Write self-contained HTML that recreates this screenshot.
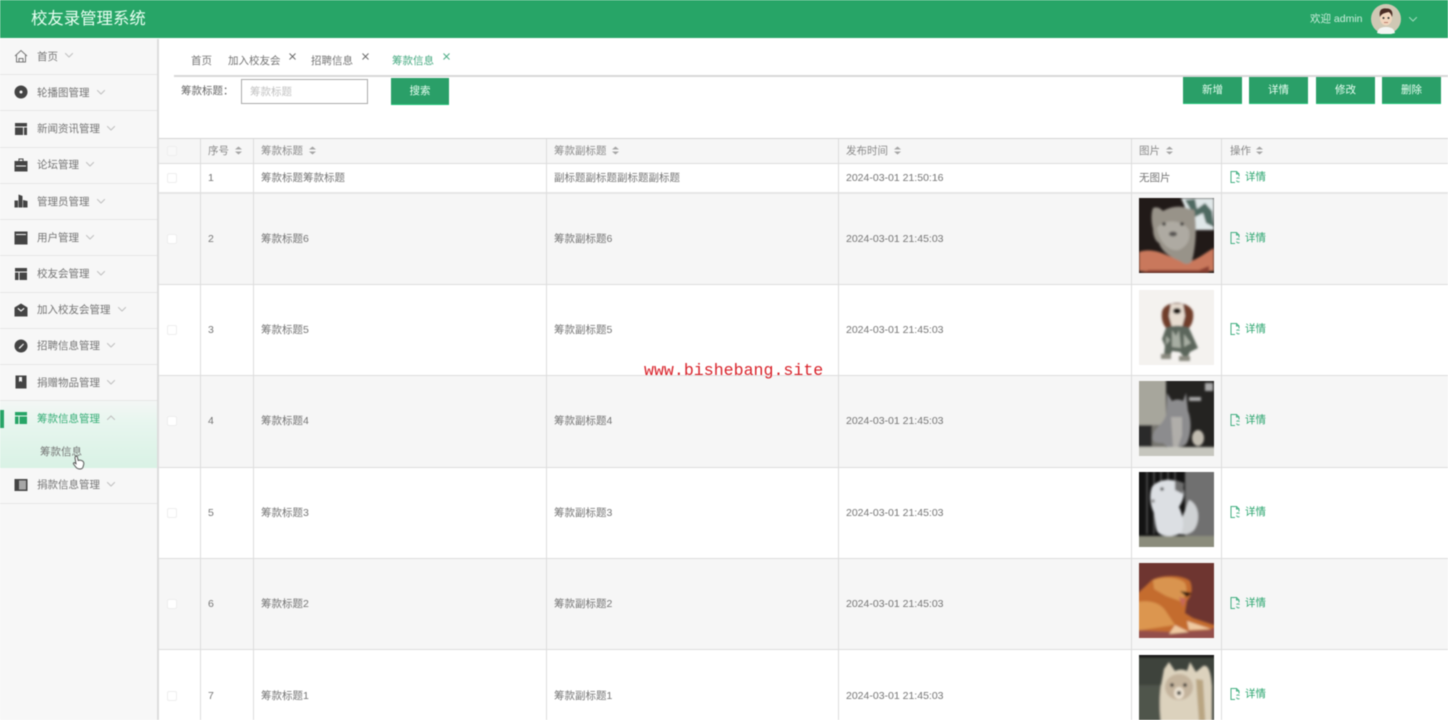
<!DOCTYPE html>
<html lang="zh"><head><meta charset="utf-8"><title>校友录管理系统</title>
<style>
*{box-sizing:border-box;margin:0;padding:0}
html,body{width:1448px;height:720px;overflow:hidden;background:#fff}
body{font-family:"Liberation Sans","Noto Sans CJK SC",sans-serif;font-size:10.5px;color:#757575;position:relative}
#wrap{position:absolute;left:0;top:0;width:1448px;height:720px;overflow:hidden;filter:blur(.45px)}
.a{position:absolute;white-space:nowrap;line-height:14px}
.top{position:absolute;left:0;top:0;width:1448px;height:38px;background:#27a567}
.side{position:absolute;left:0;top:39px;width:159px;height:681px;background:#f7f7f7;border-right:2px solid #dcdcdc}
.l{position:absolute;left:0;width:157px;height:1px;background:#e6e6e6}
.ic{position:absolute;left:14px;width:14px;height:14px;fill:#444}
.ch{position:absolute;width:8px;height:5px;fill:none;stroke:#c0c0c0;stroke-width:1}
.btn{position:absolute;background:#2a9f68;color:#e8fff2;text-align:center;border-bottom:1px solid #1fc477;height:27px;line-height:27px;width:59px;top:77px}
.hl{position:absolute;left:159px;width:1289px;height:1px;background:#ddd}
.vl{position:absolute;top:139px;width:1px;height:581px;background:#ddd}
.alt{position:absolute;left:159px;width:1289px;background:#f6f6f6;height:91px}
.cb{position:absolute;left:167px;width:10px;height:10px;border:1px solid #eee;border-radius:2px;background:#fff}
.img{position:absolute;left:1139px;width:75px;height:75px;overflow:hidden}
.img svg{display:block;width:75px;height:75px}
.det{position:absolute;left:1230px;color:#2ba56f;white-space:nowrap;line-height:14px;padding-left:15px}
.det svg{position:absolute;left:0;top:1px;width:11px;height:12px;fill:none;stroke:#45b083;stroke-width:1}
.sort{position:absolute;width:7px;height:9px;fill:#a5a5a5}
.x{position:absolute;width:7px;height:7px;fill:none;stroke:#666;stroke-width:.9}
</style></head><body><div id="wrap">

<div class="top"></div>
<div class="a" style="left:31px;top:9px;font-size:16.4px;line-height:20px;color:#e8fff2">校友录管理系统</div>
<div class="a" style="left:1310px;top:12px;color:#cdeedd;font-size:10.5px">欢迎 admin</div>
<svg style="position:absolute;left:1371px;top:4px;width:30px;height:30px" viewBox="0 0 30 30">
<circle cx="15" cy="15" r="15" fill="#cfc8b4"/><path d="M6 29c1-5 5-6 9-6s8 1 9 6l-4 1h-10z" fill="#f3f5f2"/><ellipse cx="15" cy="14" rx="6" ry="7.500" fill="#f1d5bd"/><path d="M9 13C7.500 6 11 4 15 4.500c5-.5 7.500 3 6 8.500-1-3-2-4.500-3.500-5-3 1-6.500 1-8.500 5z" fill="#4a2c25"/><circle cx="12.500" cy="14" r="1" fill="#333"/><circle cx="17.500" cy="14" r="1" fill="#333"/><path d="M13 18.500h4" stroke="#b06a5a" stroke-width=".8"/></svg>
<svg class="ch" style="left:1409px;top:17px;stroke:#9fdcbc" viewBox="0 0 8 5"><path d="M0 0l4 4 4-4"/></svg>

<div class="side"></div>
<div class="l" style="top:74px"></div><div class="l" style="top:110px"></div><div class="l" style="top:147px"></div><div class="l" style="top:183px"></div><div class="l" style="top:219px"></div><div class="l" style="top:255px"></div><div class="l" style="top:292px"></div><div class="l" style="top:328px"></div><div class="l" style="top:364px"></div><div class="l" style="top:400px"></div><div class="l" style="top:503px"></div>

<div style="position:absolute;left:0;top:401px;width:157px;height:67px;background:linear-gradient(#f4f6f5,#e8f6ef 30%,#d9f2e5)"></div>
<div style="position:absolute;left:0;top:410px;width:4px;height:18px;background:#27a567"></div>

<svg class="ic" style="top:49px;fill:none;stroke:#777;stroke-width:1" viewBox="0 0 14 14"><path d="M1 7l6-5.500L13 7M2.500 6v7h9V6M5 13V9.500h4V13"/></svg>
<div class="a" style="left:37px;top:50px">首页</div><svg class="ch" style="left:65px;top:53px" viewBox="0 0 8 5"><path d="M0 0l4 4 4-4"/></svg>

<svg class="ic" style="top:85px" viewBox="0 0 14 14"><path fill-rule="evenodd" d="M7 .5a6.500 6.500 0 1 0 0 13 6.500 6.500 0 0 0 0-13zM7 5.500a1.500 1.500 0 1 1 0 3 1.500 1.500 0 0 1 0-3z"/></svg>
<div class="a" style="left:37px;top:86px">轮播图管理</div><svg class="ch" style="left:97px;top:90px" viewBox="0 0 8 5"><path d="M0 0l4 4 4-4"/></svg>

<svg class="ic" style="top:122px" viewBox="0 0 14 14"><path d="M1 1h12v3.500H1zM1 5.500h8V13H1zM10 5.500h3V13h-3z"/></svg>
<div class="a" style="left:37px;top:122px">新闻资讯管理</div><svg class="ch" style="left:107px;top:126px" viewBox="0 0 8 5"><path d="M0 0l4 4 4-4"/></svg>

<svg class="ic" style="top:158px" viewBox="0 0 14 14"><path fill-rule="evenodd" d="M4.500 .5h5V3H13.500v10.500H.5V3h4zM5.500 1.500V3h3V1.500zM2 7.500v1h10v-1z"/></svg>
<div class="a" style="left:37px;top:158px">论坛管理</div><svg class="ch" style="left:86px;top:162px" viewBox="0 0 8 5"><path d="M0 0l4 4 4-4"/></svg>

<svg class="ic" style="top:194px" viewBox="0 0 14 14"><path d="M.5 13.500V6.500h3.500v7zM4.500 13.500V.5l4 1.500v11.500zM9 13.500V6l4.500 1v6.500z"/></svg>
<div class="a" style="left:37px;top:195px">管理员管理</div><svg class="ch" style="left:97px;top:199px" viewBox="0 0 8 5"><path d="M0 0l4 4 4-4"/></svg>

<svg class="ic" style="top:231px" viewBox="0 0 14 14"><path fill-rule="evenodd" d="M.5 .5h13v13H.5zM2 3v1h10V3z"/></svg>
<div class="a" style="left:37px;top:231px">用户管理</div><svg class="ch" style="left:86px;top:235px" viewBox="0 0 8 5"><path d="M0 0l4 4 4-4"/></svg>

<svg class="ic" style="top:267px" viewBox="0 0 14 14"><path d="M1 1h12v3.500H1zM1 5.500h3.500V13H1zM5.500 5.500H13V13H5.500z"/></svg>
<div class="a" style="left:37px;top:267px">校友会管理</div><svg class="ch" style="left:97px;top:271px" viewBox="0 0 8 5"><path d="M0 0l4 4 4-4"/></svg>

<svg class="ic" style="top:303px" viewBox="0 0 14 14"><path d="M7 .5l6.500 4V13.500H.5V4.500zM3.500 5.800L7 8.800l3.500-3-.8-.9L7 7.200 4.300 4.900z" fill-rule="evenodd"/></svg>
<div class="a" style="left:37px;top:303px">加入校友会管理</div><svg class="ch" style="left:118px;top:307px" viewBox="0 0 8 5"><path d="M0 0l4 4 4-4"/></svg>

<svg class="ic" style="top:339px" viewBox="0 0 14 14"><path fill-rule="evenodd" d="M7 .5a6.500 6.500 0 1 0 0 13 6.500 6.500 0 0 0 0-13zM9.300 4.500l.7.700L6 9.500l-1.200.2.200-1.200z"/></svg>
<div class="a" style="left:37px;top:339px">招聘信息管理</div><svg class="ch" style="left:107px;top:343px" viewBox="0 0 8 5"><path d="M0 0l4 4 4-4"/></svg>

<svg class="ic" style="top:375px" viewBox="0 0 14 14"><path fill-rule="evenodd" d="M1.500 .5h11v13h-11zM5 2v5l1.500-1L8 7V2z"/></svg>
<div class="a" style="left:37px;top:376px">捐赠物品管理</div><svg class="ch" style="left:107px;top:380px" viewBox="0 0 8 5"><path d="M0 0l4 4 4-4"/></svg>

<svg class="ic" style="top:411px;fill:#27a567" viewBox="0 0 14 14"><path d="M1 1h12v3.500H1zM1 5.500h3.500V13H1zM5.500 5.500H13V13H5.500z"/></svg>
<div class="a" style="left:37px;top:412px;color:#35ad76">筹款信息管理</div><svg class="ch" style="left:107px;top:415px" viewBox="0 0 8 5"><path d="M0 5l4-4 4 4"/></svg>

<div class="a" style="left:40px;top:445px">筹款信息</div>
<svg style="position:absolute;left:72px;top:455px;width:13px;height:15px" viewBox="0 0 13 15"><path d="M3.500 1.500c1-.7 1.800 0 2 1l.7 3 1.300-.4 1.500.2 1.700.8c1 .7 1.300 2 1 3.400l-.7 2.500c-.4 1.400-1.500 2-3 2-2 0-3.300-.7-4.200-2L1.500 9c-.5-.8.300-1.700 1.200-1.200L4 8.700 3 3c-.1-.6 0-1.100.5-1.500z" fill="#fff" stroke="#555" stroke-width="1"/></svg>

<svg class="ic" style="top:478px" viewBox="0 0 14 14"><path fill-rule="evenodd" d="M.5 1h13v12H.5zM5 2.500v9h7v-9z"/><path d="M5 2.500h7v9H5z" opacity=".45"/></svg>
<div class="a" style="left:37px;top:478px">捐款信息管理</div><svg class="ch" style="left:107px;top:482px" viewBox="0 0 8 5"><path d="M0 0l4 4 4-4"/></svg>

<div class="a" style="left:191px;top:54px">首页</div>
<div class="a" style="left:228px;top:54px">加入校友会</div>
<svg class="x" style="left:289px;top:53px" viewBox="0 0 7 7"><path d="M.5 .5l6 6M6.500 .5l-6 6"/></svg>
<div class="a" style="left:311px;top:54px">招聘信息</div>
<svg class="x" style="left:362px;top:53px" viewBox="0 0 7 7"><path d="M.5 .5l6 6M6.500 .5l-6 6"/></svg>
<div class="a" style="left:392px;top:54px;color:#45a980">筹款信息</div>
<svg class="x" style="left:443px;top:53px;stroke:#45a980" viewBox="0 0 7 7"><path d="M.5 .5l6 6M6.500 .5l-6 6"/></svg>
<div style="position:absolute;left:174px;top:75px;width:1274px;height:2px;background:#d8d8d8"></div>

<div class="a" style="left:181px;top:84px;color:#666">筹款标题：</div>
<div style="position:absolute;left:241px;top:79px;width:127px;height:25px;border:1px solid #aaa;background:#fff"></div>
<div class="a" style="left:250px;top:85px;color:#c2c2c2">筹款标题</div>
<div class="btn" style="left:391px;top:78px;width:58px;height:27px">搜索</div>
<div class="btn" style="left:1183px">新增</div>
<div class="btn" style="left:1249px">详情</div>
<div class="btn" style="left:1316px">修改</div>
<div class="btn" style="left:1382px">删除</div>

<div style="position:absolute;left:159px;top:139px;width:1289px;height:25px;background:#f6f6f6"></div>
<div class="alt" style="top:193px"></div>
<div class="alt" style="top:376px"></div>
<div class="alt" style="top:558px"></div>

<div class="hl" style="top:138px;background:#d4d4d4"></div><div class="hl" style="top:163px"></div><div class="hl" style="top:192px;height:2px;background:#e6e6e6"></div><div class="hl" style="top:284px"></div><div class="hl" style="top:375px"></div><div class="hl" style="top:467px"></div><div class="hl" style="top:558px"></div><div class="hl" style="top:649px"></div>
<div class="vl" style="left:200px"></div><div class="vl" style="left:253px"></div><div class="vl" style="left:546px"></div><div class="vl" style="left:838px"></div><div class="vl" style="left:1131px"></div><div class="vl" style="left:1221px"></div>

<div class="cb" style="top:146px;background:#f8f8f8"></div><div class="cb" style="top:173px"></div><div class="cb" style="top:234px"></div><div class="cb" style="top:325px"></div><div class="cb" style="top:416px"></div><div class="cb" style="top:508px"></div><div class="cb" style="top:599px"></div><div class="cb" style="top:691px"></div>

<div class="a" style="left:208px;top:144px;color:#8a8a8a">序号</div><svg class="sort" style="left:235px;top:146px" viewBox="0 0 7 9"><path d="M3.500 .5L7 3.500H0zM0 5.500h7L3.500 8.500z"/></svg>
<div class="a" style="left:261px;top:144px;color:#8a8a8a">筹款标题</div><svg class="sort" style="left:309px;top:146px" viewBox="0 0 7 9"><path d="M3.500 .5L7 3.500H0zM0 5.500h7L3.500 8.500z"/></svg>
<div class="a" style="left:554px;top:144px;color:#8a8a8a">筹款副标题</div><svg class="sort" style="left:612px;top:146px" viewBox="0 0 7 9"><path d="M3.500 .5L7 3.500H0zM0 5.500h7L3.500 8.500z"/></svg>
<div class="a" style="left:846px;top:144px;color:#8a8a8a">发布时间</div><svg class="sort" style="left:894px;top:146px" viewBox="0 0 7 9"><path d="M3.500 .5L7 3.500H0zM0 5.500h7L3.500 8.500z"/></svg>
<div class="a" style="left:1139px;top:144px;color:#8a8a8a">图片</div><svg class="sort" style="left:1166px;top:146px" viewBox="0 0 7 9"><path d="M3.500 .5L7 3.500H0zM0 5.500h7L3.500 8.500z"/></svg>
<div class="a" style="left:1230px;top:144px;color:#8a8a8a">操作</div><svg class="sort" style="left:1256px;top:146px" viewBox="0 0 7 9"><path d="M3.500 .5L7 3.500H0zM0 5.500h7L3.500 8.500z"/></svg>

<div class="a" style="left:208px;top:171px">1</div><div class="a" style="left:261px;top:171px">筹款标题筹款标题</div><div class="a" style="left:554px;top:171px">副标题副标题副标题副标题</div><div class="a" style="left:846px;top:171px">2024-03-01 21:50:16</div><div class="a" style="left:1139px;top:171px">无图片</div>
<div class="det" style="top:170px"><svg viewBox="0 0 11 12"><path d="M5 11.500H1V.5h5.500L9 3v2.500M6.500 .5V3H9M9.500 7.500a2 2 0 0 0-3 0M6.500 9.500a2 2 0 0 0 3 1"/></svg>详情</div>

<div class="a" style="left:208px;top:232px">2</div><div class="a" style="left:261px;top:232px">筹款标题6</div><div class="a" style="left:554px;top:232px">筹款副标题6</div><div class="a" style="left:846px;top:232px">2024-03-01 21:45:03</div>
<div class="det" style="top:231px"><svg viewBox="0 0 11 12"><path d="M5 11.500H1V.5h5.500L9 3v2.500M6.500 .5V3H9M9.500 7.500a2 2 0 0 0-3 0M6.500 9.500a2 2 0 0 0 3 1"/></svg>详情</div>
<div class="a" style="left:208px;top:323px">3</div><div class="a" style="left:261px;top:323px">筹款标题5</div><div class="a" style="left:554px;top:323px">筹款副标题5</div><div class="a" style="left:846px;top:323px">2024-03-01 21:45:03</div>
<div class="det" style="top:322px"><svg viewBox="0 0 11 12"><path d="M5 11.500H1V.5h5.500L9 3v2.500M6.500 .5V3H9M9.500 7.500a2 2 0 0 0-3 0M6.500 9.500a2 2 0 0 0 3 1"/></svg>详情</div>
<div class="a" style="left:208px;top:414px">4</div><div class="a" style="left:261px;top:414px">筹款标题4</div><div class="a" style="left:554px;top:414px">筹款副标题4</div><div class="a" style="left:846px;top:414px">2024-03-01 21:45:03</div>
<div class="det" style="top:413px"><svg viewBox="0 0 11 12"><path d="M5 11.500H1V.5h5.500L9 3v2.500M6.500 .5V3H9M9.500 7.500a2 2 0 0 0-3 0M6.500 9.500a2 2 0 0 0 3 1"/></svg>详情</div>
<div class="a" style="left:208px;top:506px">5</div><div class="a" style="left:261px;top:506px">筹款标题3</div><div class="a" style="left:554px;top:506px">筹款副标题3</div><div class="a" style="left:846px;top:506px">2024-03-01 21:45:03</div>
<div class="det" style="top:505px"><svg viewBox="0 0 11 12"><path d="M5 11.500H1V.5h5.500L9 3v2.500M6.500 .5V3H9M9.500 7.500a2 2 0 0 0-3 0M6.500 9.500a2 2 0 0 0 3 1"/></svg>详情</div>
<div class="a" style="left:208px;top:597px">6</div><div class="a" style="left:261px;top:597px">筹款标题2</div><div class="a" style="left:554px;top:597px">筹款副标题2</div><div class="a" style="left:846px;top:597px">2024-03-01 21:45:03</div>
<div class="det" style="top:596px"><svg viewBox="0 0 11 12"><path d="M5 11.500H1V.5h5.500L9 3v2.500M6.500 .5V3H9M9.500 7.500a2 2 0 0 0-3 0M6.500 9.500a2 2 0 0 0 3 1"/></svg>详情</div>
<div class="a" style="left:208px;top:689px">7</div><div class="a" style="left:261px;top:689px">筹款标题1</div><div class="a" style="left:554px;top:689px">筹款副标题1</div><div class="a" style="left:846px;top:689px">2024-03-01 21:45:03</div>
<div class="det" style="top:687px"><svg viewBox="0 0 11 12"><path d="M5 11.500H1V.5h5.500L9 3v2.500M6.500 .5V3H9M9.500 7.500a2 2 0 0 0-3 0M6.500 9.500a2 2 0 0 0 3 1"/></svg>详情</div>

<div class="img" style="top:198px"><svg viewBox="0 0 75 75"><defs><filter id="b" filterUnits="userSpaceOnUse" x="-10" y="-10" width="95" height="95"><feGaussianBlur stdDeviation="1"/></filter></defs><rect width="75" height="75" fill="#211a18"/><g filter="url(#b)"><path d="M42 0h33v32H56z" fill="#dfe7e8"/><path d="M46 2l10-1 2 10 8-6 7 8 2 16-8-4-3-10-8 4z" fill="#4f6a62"/><path d="M0 54C10 50 22 54 30 58l16 6c10 0 18-8 29-14v23H0z" fill="#c9785c"/><path d="M10 72h50l10-4v7H0z" fill="#8a3f33"/><path d="M14 10c5-2 8 1 10 3 10-6 22-5 28-1 3-2 4 1 4 6 2 16 0 34-3 45-4 5-8 3-12 0-10-4-18-9-21-18-4-2-6-8-6-14-2-8-2-16 0-21z" fill="#989389"/><path d="M18 30c8-10 26-8 32 2 2 10-2 16-10 20-10 2-20-8-22-22z" fill="#aeaaa2"/><circle cx="25" cy="26" r="1.800" fill="#3c3a38"/><circle cx="43" cy="26" r="1.800" fill="#3c3a38"/><ellipse cx="34" cy="36" rx="4" ry="2.500" fill="#595552"/></g></svg></div>

<div class="img" style="top:290px"><svg viewBox="0 0 75 75"><rect width="75" height="75" fill="#f4f2ef"/><g filter="url(#b)"><path d="M23 22c1-6 8-9 15-9s14 3 16 9c1 7-1 13-5 17H28c-4-4-6-10-5-17z" fill="#6f3d2c"/><path d="M32 14h12l2 12-3 11h-10l-3-11z" fill="#e8ddd0"/><ellipse cx="38" cy="21" rx="4" ry="3" fill="#1c1210"/><path d="M27 38c6-3 17-3 23 0l9 20-8 4-2 4H44l-3-4-8-1-2 5h-6l1-10-3-7z" fill="#5b665c"/><path d="M33 40l4 6 3-6 2 18-9-1zM45 44l7 9-7 4zM27 46l4 4-4 5z" fill="#a7aea3"/><rect x="22" y="64" width="10" height="5" fill="#8a8a80"/><rect x="40" y="66" width="11" height="5" fill="#8a8a80"/></g></svg></div>

<div class="img" style="top:381px"><svg viewBox="0 0 75 75"><rect width="75" height="75" fill="#242321"/><g filter="url(#b)"><rect x="-5" y="-5" width="32" height="50" fill="#a7a69c"/><rect x="-5" y="44" width="19" height="22" fill="#2c2b29"/><rect x="13" y="44" width="14" height="22" fill="#77766f"/><rect x="50" y="16" width="12" height="4" fill="#a8a8a8"/><rect x="66" y="2" width="8" height="8" fill="#aaa"/><rect x="-5" y="66" width="85" height="14" fill="#c6c6be"/><path d="M28 12l5 8c4-2 7-2 11 0l3-8 2 18c4 10 3 24-1 32-3 4-8 4-11 4H28l-4-4c-6 0-12 0-10-8 2-8 10-10 13-20z" fill="#8c8c8e"/><path d="M32 36h11v18l-4 12h-5z" fill="#b0aeaa"/><ellipse cx="59" cy="57" rx="6" ry="8" fill="#c1bcb0"/></g></svg></div>

<div class="img" style="top:472px"><svg viewBox="0 0 75 75"><rect width="75" height="75" fill="#131313"/><g filter="url(#b)"><rect x="46" y="-5" width="34" height="70" fill="#707070"/><rect x="-5" y="64" width="85" height="16" fill="#8b8c7c"/><path d="M8 -2v64M15 -2v64M22 -2v24M29 -2v14M36 -2v10" stroke="#8a8a8a" stroke-width=".8"/><path d="M50 28c10 4 12 20 5 30-6 6-14 5-18 3z" fill="#cfd2d4"/><path d="M13 15c6-8 22-10 30-2 4 8 1 16-3 22 4 8 6 20 2 26-6 4-20 5-24-2-2-6-2-12-3-18-4-8-5-18-2-26z" fill="#dcdfe3"/><path d="M36 8l9 3-1 11-8-4z" fill="#6e6e6e"/><circle cx="23" cy="17" r="1.800" fill="#555"/><circle cx="14" cy="29" r="1.800" fill="#888"/></g></svg></div>

<div class="img" style="top:563px"><svg viewBox="0 0 75 75"><rect width="75" height="75" fill="#6e3530"/><g filter="url(#b)"><rect x="-5" y="62" width="85" height="18" fill="#94504c"/><path d="M13 17c8-5 30-6 38 1 3 7 2 14-3 20l-2 12 8 5 24 8-8 4-37 2-38-2V34c7-7 13-12 18-17z" fill="#c46c2e"/><path d="M14 17c10-4 26-3 32 3 3 7 1 15-5 18l-14-5-12-7z" fill="#d99450"/><path d="M-5 40c13-4 25-1 31 7l10 15-41 6z" fill="#dc9650"/><path d="M36 62l14 7-20 2zM48 58l24 8-22 1z" fill="#efc9a0"/><path d="M41 28l12 2-5 4z" fill="#2a1510"/><path d="M40 34l4 10 3-8z" fill="#c6685a"/></g></svg></div>

<div class="img" style="top:655px"><svg viewBox="0 0 75 75"><rect width="75" height="75" fill="#3e433c"/><g filter="url(#b)"><rect x="-5" y="-3" width="85" height="5" fill="#0f0f0f"/><rect x="-5" y="30" width="27" height="50" fill="#4f544c"/><path d="M25 14l5-7 6 9c4-2 8-2 12 0l3-9 6 10 7-6c6-2 8 8 9 20v49H24c-4-19-4-41-1-55z" fill="#dcd2bd"/><ellipse cx="40" cy="32" rx="14" ry="13" fill="#c4b49d"/><ellipse cx="40" cy="38" rx="5" ry="6" fill="#ece2d2"/><circle cx="33" cy="30" r="1.800" fill="#222"/><circle cx="46" cy="30" r="1.800" fill="#222"/><circle cx="40" cy="38" r="2" fill="#1b1b1b"/><path d="M57 24l4 56h6l-3-55z" fill="#b9a582"/></g></svg></div>

<div class="a" style="left:644px;top:361px;font-family:'Liberation Mono',monospace;font-size:16.600px;line-height:20px;color:#d9222a">www.bishebang.site</div>

</div></body></html>
